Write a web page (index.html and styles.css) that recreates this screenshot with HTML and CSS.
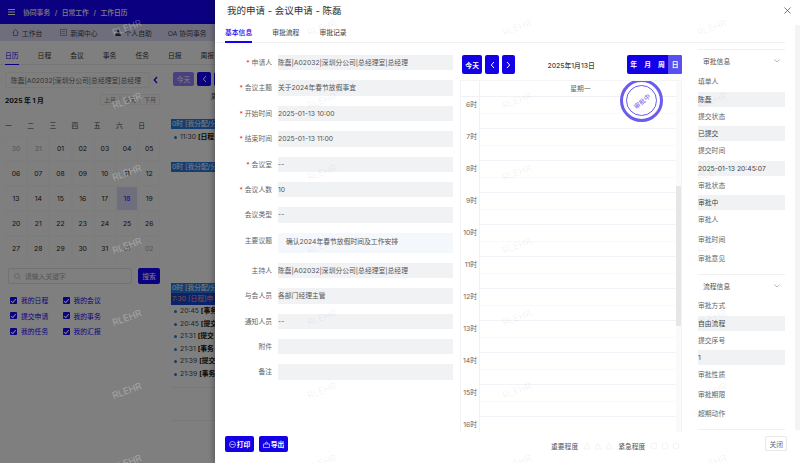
FILE: index.html
```html
<!DOCTYPE html>
<html lang="zh-CN">

<head>
    <meta charset="UTF-8">
    <title>工作日历</title>
    <link rel="stylesheet" href="styles.css">
</head>

<body>
    <!-- 背景页面 -->
    <div class="page">
        <div class="topBar">
            <svg class="menuIcon" width="7" height="6" viewBox="0 0 7 6"><path d="M0 .5h7M0 3h7M0 5.500h7" stroke="#fff" stroke-width="1"/></svg>
            <span>协同事务</span><i>/</i><span>日常工作</span><i>/</i><span>工作日历</span>
        </div>
        <div class="navBar">
            <span class="navItem n1">
                <svg width="7" height="7" viewBox="0 0 7 7"><path d="M.5 3.500L3.500.5l3 3M1.500 3v3.500h4V3" fill="none" stroke="#444" stroke-width=".6"/></svg>工作台
            </span>
            <span class="navItem n2">
                <svg width="7" height="7" viewBox="0 0 7 7"><path d="M.5.5h6v6h-6zM2 2.500h3M2 4.500h3" fill="none" stroke="#666" stroke-width=".6"/></svg>新闻中心
            </span>
            <span class="navItem n3">
                <svg width="8" height="7" viewBox="0 0 8 7"><circle cx="4" cy="2" r="1.500" fill="#333"/><path d="M1 7c0-2 1.500-3 3-3s3 1 3 3z" fill="#333"/></svg>个人自助
            </span>
            <span class="navItem n4">OA 协同事务</span>
        </div>
        <div class="pageTabs">
            <span class="active">日历</span><span>日程</span><span>会议</span><span>事务</span><span>任务</span><span>日报</span><span>周报</span>
        </div>
        <div class="pageMain">
            <div class="leftCol">
                <div class="personRow">
                    <div class="personBox">陈磊|A02032|深圳分公司|总经理室|总经理</div>
                    <svg width="5" height="8" viewBox="0 0 5 8"><path d="M4 1L1.300 4L4 7" fill="none" stroke="#1600ff" stroke-width="1.300"/></svg>
                </div>
                <div class="monthRow">
                    <b>2025 年 1 月</b>
                    <div class="monthBtns"><span>上月</span><span>今天</span><span>下月</span></div>
                </div>
                <div class="weekHead">
                    <span>一</span><span>二</span><span>三</span><span>四</span><span>五</span><span>六</span><span>日</span>
                </div>
                <div class="dateGrid">
                    <span class="off">30</span><span class="off">31</span><span>01</span><span>02</span><span>03</span><span>04</span><span>05</span>
                    <span>06</span><span>07</span><span>08</span><span>09</span><span>10</span><span>11</span><span>12</span>
                    <span>13</span><span>14</span><span>15</span><span>16</span><span>17</span><span class="today">18</span><span>19</span>
                    <span>20</span><span>21</span><span>22</span><span>23</span><span>24</span><span>25</span><span>26</span>
                    <span>27</span><span>28</span><span>29</span><span>30</span><span>31</span><span class="off">01</span><span class="off">02</span>
                </div>
                <div class="searchRow">
                    <div class="searchBox">
                        <svg width="7" height="7" viewBox="0 0 7 7"><circle cx="3" cy="3" r="2.400" fill="none" stroke="#bbb" stroke-width=".8"/><path d="M5 5l1.500 1.500" stroke="#bbb" stroke-width=".8"/></svg>
                        请输入关键字
                    </div>
                    <button class="searchBtn">搜索</button>
                </div>
                <div class="checks">
                    <label><em></em>我的日程</label><label><em></em>我的会议</label>
                    <label><em></em>提交申请</label><label><em></em>我的事务</label>
                    <label><em></em>我的任务</label><label><em></em>我的汇报</label>
                </div>
            </div>
            <div class="rightCol">
                <div class="calTools">
                    <button class="blueBtn todayBtn">今天</button>
                    <button class="blueBtn arrowBtn">
                        <svg width="5" height="8" viewBox="0 0 5 8"><path d="M4 1L1.300 4L4 7" fill="none" stroke="#fff" stroke-width="1"/></svg>
                    </button>
                    <button class="blueBtn arrowBtn"></button>
                </div>
                <div class="calHead">周</div>
                <div class="bar first">0时 [我分配/分</div>
                <div class="ev">11:30 <b>[日程</b></div>
                <div class="bar second">0时 [我分配/分</div>
                <div class="bar third">0时 [我分配/分</div>
                <div class="bar fourth">7:30 [日程]申</div>
                <div class="ev tight">20:45 <b>[事务</b></div>
                <div class="ev tight">20:45 <b>[提交</b></div>
                <div class="ev tight">21:31 <b>[提交</b></div>
                <div class="ev tight">21:31 <b>[事务</b></div>
                <div class="ev tight">21:39 <b>[提交</b></div>
                <div class="ev tight">21:39 <b>[事务</b></div>
                <div class="calLine"></div>
                <div class="calLine low"></div>
            </div>
        </div>
        <div class="mask"></div>
    </div>

    <!-- 抽屉 -->
    <div class="drawer">
        <div class="drawerHead">
            <span>我的申请 - 会议申请 - 陈磊</span>
            <svg width="7" height="7" viewBox="0 0 7 7"><path d="M.5.5l6 6M6.500.5l-6 6" stroke="#555" stroke-width=".8"/></svg>
        </div>
        <div class="drawerTabs">
            <span class="active">基本信息</span><span>审批流程</span><span>审批记录</span>
        </div>
        <div class="drawerBody">
            <div class="form">
                <div class="row"><label><s>*</s>申请人</label><div class="field">陈磊|A02032|深圳分公司|总经理室|总经理</div></div>
                <div class="row"><label><s>*</s>会议主题</label><div class="field">关于2024年春节放假事宜</div></div>
                <div class="row"><label><s>*</s>开始时间</label><div class="field">2025-01-13 10:00</div></div>
                <div class="row"><label><s>*</s>结束时间</label><div class="field">2025-01-13 11:00</div></div>
                <div class="row"><label><s>*</s>会议室</label><div class="field">--</div></div>
                <div class="row"><label><s>*</s>会议人数</label><div class="field">10</div></div>
                <div class="row"><label>会议类型</label><div class="field">--</div></div>
                <div class="row tall"><label>主要议题</label><div class="field area">确认2024年春节放假时间及工作安排</div></div>
                <div class="row"><label>主持人</label><div class="field">陈磊|A02032|深圳分公司|总经理室|总经理</div></div>
                <div class="row"><label>与会人员</label><div class="field">各部门经理主管</div></div>
                <div class="row"><label>通知人员</label><div class="field">--</div></div>
                <div class="row"><label>附件</label><div class="field"></div></div>
                <div class="row"><label>备注</label><div class="field"></div></div>
            </div>

            <div class="schedule">
                <div class="schTools">
                    <button class="schBtn wide">今天</button>
                    <button class="schBtn">
                        <svg width="5" height="8" viewBox="0 0 5 8"><path d="M4 1L1.300 4L4 7" fill="none" stroke="#fff" stroke-width="1"/></svg>
                    </button>
                    <button class="schBtn">
                        <svg width="5" height="8" viewBox="0 0 5 8"><path d="M1 1L3.700 4L1 7" fill="none" stroke="#fff" stroke-width="1"/></svg>
                    </button>
                    <div class="schDate">2025年1月13日</div>
                    <div class="schView"><span>年</span><span>月</span><span>周</span><span class="on">日</span></div>
                </div>
                <div class="schGrid">
                    <div class="schHead"><div class="axis"></div><div class="schDay">星期一</div></div>
                    <div class="schBody">
                        <div class="hour"><div class="axis">6时</div><div class="slot"></div></div>
                        <div class="hour"><div class="axis">7时</div><div class="slot"></div></div>
                        <div class="hour"><div class="axis">8时</div><div class="slot"></div></div>
                        <div class="hour"><div class="axis">9时</div><div class="slot"></div></div>
                        <div class="hour"><div class="axis">10时</div><div class="slot"></div></div>
                        <div class="hour"><div class="axis">11时</div><div class="slot"></div></div>
                        <div class="hour"><div class="axis">12时</div><div class="slot"></div></div>
                        <div class="hour"><div class="axis">13时</div><div class="slot"></div></div>
                        <div class="hour"><div class="axis">14时</div><div class="slot"></div></div>
                        <div class="hour"><div class="axis">15时</div><div class="slot"></div></div>
                        <div class="hour"><div class="axis">16时</div><div class="slot"></div></div>
                    </div>
                    <div class="schScroll"><div class="schThumb"></div></div>
                    <!-- 审批中印章 -->
                    <div class="stamp"><div class="stampInner"><span>审批中</span></div></div>
                </div>
            </div>

            <div class="side">
                <div class="sideTitle">审批信息
                    <svg width="6" height="4" viewBox="0 0 6 4"><path d="M.5.500L3 3L5.500.500" fill="none" stroke="#888" stroke-width=".6"/></svg>
                </div>
                <div class="sideLabel">填单人</div><div class="sideValue">陈磊</div>
                <div class="sideLabel">提交状态</div><div class="sideValue">已提交</div>
                <div class="sideLabel">提交时间</div><div class="sideValue">2025-01-13 20:45:07</div>
                <div class="sideLabel">审批状态</div><div class="sideValue">审批中</div>
                <div class="sideLabel">审批人</div>
                <div class="sideLabel">审批时间</div>
                <div class="sideLabel">审批意见</div>
                <div class="sideTitle second">流程信息
                    <svg width="6" height="4" viewBox="0 0 6 4"><path d="M.5.500L3 3L5.500.500" fill="none" stroke="#888" stroke-width=".6"/></svg>
                </div>
                <div class="sideLabel">审批方式</div><div class="sideValue">自由流程</div>
                <div class="sideLabel">提交序号</div><div class="sideValue">1</div>
                <div class="sideLabel">审批性质</div>
                <div class="sideLabel">审批期限</div>
                <div class="sideLabel">超期动作</div>
            </div>
        </div>
        <div class="drawerFoot">
            <button class="footBtn">
                <svg width="7" height="7" viewBox="0 0 7 7"><circle cx="3.500" cy="3.500" r="3" fill="none" stroke="#fff" stroke-width=".6"/><path d="M1.500 3.500h4" stroke="#fff" stroke-width=".6"/></svg>打印
            </button>
            <button class="footBtn">
                <svg width="7" height="7" viewBox="0 0 7 7"><path d="M.5 3h6v3.500h-6zM2 3l1-2h1l1 2" fill="none" stroke="#fff" stroke-width=".6"/></svg>导出
            </button>
            <div class="rate first">重要程度
                <svg width="30" height="8" viewBox="0 0 30 8"><g fill="none" stroke="#f0f0f0" stroke-width=".8"><path d="M4 1l3 6H1z"/><path d="M15 1l3 6h-6z"/><path d="M26 1l3 6h-6z"/></g></svg>
            </div>
            <div class="rate">紧急程度
                <svg width="30" height="8" viewBox="0 0 30 8"><g fill="none" stroke="#f0f0f0" stroke-width=".8"><circle cx="4" cy="4" r="3"/><circle cx="15" cy="4" r="3"/><circle cx="26" cy="4" r="3"/></g></svg>
            </div>
            <button class="closeBtn">关闭</button>
        </div>
        <div class="drawerScroll"></div>
    </div>

    <!-- 水印 -->
    <div class="marks">
        <span>RLEHR</span><span>RLEHR</span><span>RLEHR</span><span>RLEHR</span>
        <span>RLEHR</span><span>RLEHR</span><span>RLEHR</span><span>RLEHR</span>
        <span>RLEHR</span><span>RLEHR</span><span>RLEHR</span><span>RLEHR</span>
        <span>RLEHR</span><span>RLEHR</span><span>RLEHR</span><span>RLEHR</span>
        <span>RLEHR</span><span>RLEHR</span><span>RLEHR</span><span>RLEHR</span>
        <span>RLEHR</span><span>RLEHR</span><span>RLEHR</span><span>RLEHR</span>
        <span>RLEHR</span><span>RLEHR</span><span>RLEHR</span><span>RLEHR</span>
    </div>
</body>

</html>
```

FILE: styles.css
```css
* {
    box-sizing: border-box;
}

body {
    margin: 0;
    width: 800px;
    height: 463px;
    display: flex;
    overflow: hidden;
    position: relative;
    background: #fff;
    font-family: Inter, "Noto Sans CJK SC", sans-serif;
    font-size: 6.800px;
    color: #555;
}

button {
    font-family: inherit;
    border: none;
    padding: 0;
}

/* 背景页面 */
.page {
    width: 215px;
    height: 463px;
    flex: none;
    overflow: hidden;
    position: relative;
    background: #fff;
}

.mask {
    position: absolute;
    top: 0;
    right: 0;
    bottom: 0;
    left: 0;
    background: rgba(0, 0, 0, .5);
}

.topBar {
    height: 24px;
    display: flex;
    align-items: center;
    gap: 3.500px;
    padding-left: 8px;
    background: #1600ff;
    color: #fff;
    font-weight: 500;
}

.topBar .menuIcon {
    margin-right: 4.500px;
}

.topBar span {
    flex: none;
}

.topBar i {
    font-style: normal;
    margin: 0 1px;
}

.navBar {
    height: 17px;
    display: flex;
    align-items: center;
    background: #dedcf8;
    color: #444;
}

.navItem {
    flex: none;
    display: flex;
    align-items: center;
    gap: 3px;
}

.navItem.n1 {
    margin-left: 12px;
}

.navItem.n2 {
    margin-left: 18px;
}

.navItem.n3 {
    margin-left: 16px;
}

.navItem.n4 {
    margin-left: 16px;
}

.pageTabs {
    height: 24px;
    display: flex;
    gap: 19px;
    padding: 8px 0 0 5px;
    border-bottom: 1px solid #ececec;
    color: #333;
}

.pageTabs span {
    flex: none;
    height: 16px;
    line-height: 13px;
    white-space: nowrap;
}

.pageTabs .active {
    color: #1600ff;
    border-bottom: 1px solid #1600ff;
}

.pageMain {
    display: flex;
}

.leftCol {
    width: 165px;
    flex: none;
    padding: 7px 0 0 5px;
}

.personRow {
    display: flex;
    align-items: center;
    gap: 3px;
}

.personBox {
    width: 145px;
    height: 16px;
    line-height: 15px;
    padding-left: 5px;
    border: 1px solid #f2f2f2;
    color: #666;
    white-space: nowrap;
    overflow: hidden;
}

.monthRow {
    display: flex;
    justify-content: space-between;
    align-items: center;
    height: 15px;
    margin-top: 4px;
    padding-right: 5px;
    color: #111;
}

.monthBtns {
    display: flex;
}

.monthBtns span {
    width: 20px;
    height: 11px;
    line-height: 10px;
    text-align: center;
    font-size: 6px;
    color: #888;
    border: 1px solid #f2f2f2;
}

.weekHead {
    display: grid;
    grid-template-columns: repeat(7, 22.2px);
    margin-top: 12px;
    height: 13px;
    line-height: 13px;
    color: #444;
}

.dateGrid {
    display: grid;
    grid-template-columns: repeat(7, 22.2px);
    grid-auto-rows: 24.9px;
    margin-top: 4px;
}

.dateGrid span {
    text-align: center;
    line-height: 24px;
    color: #222;
    border: 1px solid #fafafa;
}

.dateGrid .off {
    color: #aaa;
}

.dateGrid .today {
    background: #dedcf8;
    color: #1600ff;
}

.searchRow {
    display: flex;
    gap: 6px;
    margin: 8px 0 0 3px;
}

.searchBox {
    width: 124px;
    height: 16px;
    display: flex;
    align-items: center;
    gap: 4px;
    padding-left: 5px;
    border: 1px solid #e4e4e4;
    border-radius: 2px;
    color: #aaa;
}

.searchBtn {
    width: 22px;
    height: 16px;
    border-radius: 2px;
    background: #1600ff;
    color: #fff;
    font-size: 6.800px;
}

.checks {
    display: grid;
    grid-template-columns: 52.5px 60px;
    grid-auto-rows: 15.6px;
    margin: 8px 0 0 5px;
    color: #1600ff;
}

.checks label {
    display: flex;
    align-items: center;
    gap: 4px;
}

.checks em {
    width: 7px;
    height: 7px;
    border-radius: 1px;
    background: #1600ff;
    position: relative;
}

.checks em::after {
    content: "";
    position: absolute;
    left: 2.300px;
    top: 1px;
    width: 2px;
    height: 3.500px;
    border-right: 1px solid #fff;
    border-bottom: 1px solid #fff;
    transform: rotate(40deg);
}

.rightCol {
    flex: 1;
    padding: 7px 0 0 6px;
    min-width: 0;
}

.calTools {
    display: flex;
    gap: 3px;
    margin-left: 2px;
}

.blueBtn {
    flex: none;
    height: 14px;
    display: flex;
    align-items: center;
    justify-content: center;
    border-radius: 2px;
    background: #1600ff;
    color: #fff;
    font-size: 6.800px;
}

.todayBtn {
    width: 21px;
    background: #9480ff;
}

.arrowBtn {
    width: 14px;
}

.calHead {
    height: 33px;
    line-height: 22px;
    padding-left: 40px;
    color: #333;
}

.bar {
    height: 10px;
    line-height: 10px;
    padding-left: 1px;
    background: #2a7ce0;
    color: #fff;
    white-space: nowrap;
    overflow: hidden;
}

.bar.second {
    margin-top: 18.400px;
}

.bar.third {
    margin-top: 111px;
}

.bar.fourth {
    background: #1147d8;
    color: #ff9a80;
    height: 12px;
    line-height: 12px;
}

.ev {
    height: 12.600px;
    line-height: 12.600px;
    padding-left: 9px;
    margin-top: 2px;
    white-space: nowrap;
    position: relative;
    color: #444;
}

.ev.tight {
    margin-top: 0;
}

.ev::before {
    content: "";
    width: 3px;
    height: 3px;
    border-radius: 50%;
    background: #2a7ce0;
    position: absolute;
    left: 3px;
    top: 5px;
}

.ev b {
    color: #111;
}

.calLine {
    margin-top: 6.400px;
    border-top: 1px solid #f2f2f2;
}

.calLine.low {
    margin-top: 32px;
}

/* 抽屉 */
.drawer {
    width: 585px;
    height: 463px;
    flex: none;
    display: flex;
    flex-direction: column;
    position: relative;
    background: #fff;
    box-shadow: -2px 0 5px rgba(0, 0, 0, .25);
}

.drawerHead {
    height: 25px;
    display: flex;
    justify-content: space-between;
    align-items: center;
    padding: 0 9px 5px 12px;
    font-size: 9.500px;
    color: #333;
}

.drawerTabs {
    height: 18px;
    display: flex;
    gap: 20px;
    margin-right: 15px;
    padding-left: 10px;
    border-bottom: 1px solid #f0f0f0;
}

.drawerTabs span {
    height: 18px;
    line-height: 15px;
    font-weight: 500;
}

.drawerTabs .active {
    color: #1600f5;
    border-bottom: 2px solid #1600f5;
}

.drawerBody {
    height: 389px;
    display: flex;
}

.form {
    width: 238px;
    flex: none;
    padding-top: 12px;
}

.row {
    display: flex;
    height: 15.400px;
    margin-bottom: 10px;
}

.row label {
    width: 57px;
    flex: none;
    line-height: 15px;
    text-align: right;
    color: #666;
}

.row label s {
    text-decoration: none;
    color: #f5222d;
    margin-right: 2px;
}

.field {
    width: 175px;
    margin-left: 6px;
    line-height: 15.400px;
    background: #f1f2f4;
    color: #555;
}

.row.tall {
    height: 20px;
}

.field.area {
    height: 20px;
    line-height: 18px;
    padding-left: 8px;
    background: #f4f7fb;
}

.schedule {
    width: 222px;
    flex: none;
    margin-left: 7px;
    padding-top: 12px;
}

.schTools {
    display: flex;
    gap: 3px;
    align-items: center;
    padding-left: 2px;
}

.schBtn {
    width: 14px;
    height: 19px;
    display: flex;
    align-items: center;
    justify-content: center;
    border-radius: 2px;
    background: #1400e6;
    color: #fff;
    font-size: 6.800px;
    font-weight: 700;
}

.schBtn.wide {
    width: 21px;
}

.schDate {
    width: 109px;
    text-align: center;
    color: #444;
    font-weight: 500;
}

.schView {
    width: 57px;
    height: 19px;
    display: flex;
    border-radius: 2px;
    overflow: hidden;
    background: #1400e6;
    color: #fff;
    font-weight: 700;
}

.schView span {
    flex: 1;
    text-align: center;
    line-height: 19px;
}

.schView .on {
    background: #5a4ff0;
}

.schGrid {
    height: 352px;
    margin-top: 6px;
    position: relative;
    overflow: hidden;
    border: 1px solid #f3f3f8;
    border-bottom: none;
}

.schHead {
    height: 16px;
    display: flex;
    border-bottom: 1px solid #f0f0f6;
}

.axis {
    width: 19px;
    flex: none;
    padding-right: 2px;
    text-align: right;
    line-height: 16px;
    border-right: 1px solid #f0f0f6;
    color: #666;
}

.schDay {
    flex: 1;
    text-align: center;
    line-height: 16px;
    color: #666;
}

.hour {
    height: 32px;
    display: flex;
}

.slot {
    flex: 1;
    border-bottom: 1px solid #f2f2f8;
    background: linear-gradient(#f9f9fb, #f9f9fb) 0 15.500px / 100% 1px no-repeat;
}

.schScroll {
    position: absolute;
    top: 0;
    right: 0;
    bottom: 0;
    width: 5px;
    background: #fafafa;
}

.schThumb {
    margin-top: 105px;
    height: 140px;
    background: #e6e6e6;
}

.stamp {
    position: absolute;
    left: 159px;
    top: -2px;
    width: 43px;
    height: 43px;
    padding: 3px;
    border: 3px solid #6a5cec;
    border-radius: 50%;
    background: #fff;
}

.stampInner {
    width: 100%;
    height: 100%;
    display: flex;
    align-items: center;
    justify-content: center;
    border: 1px solid #6a5cec;
    border-radius: 50%;
    color: #6a5cec;
}

.stampInner span {
    transform: rotate(-40deg);
    font-size: 6.500px;
}

.side {
    width: 87px;
    flex: none;
    margin: 6px 0 0 16px;
    border-top: 1px solid #f0f0f0;
    border-bottom: 1px solid #f0f0f0;
    height: 381px;
}

.sideTitle {
    height: 22px;
    display: flex;
    justify-content: space-between;
    align-items: center;
    padding: 0 5px;
    color: #555;
}

.sideTitle.second {
    margin-top: 5.500px;
    border-top: 1px solid #f0f0f0;
}

.sideLabel {
    height: 19.500px;
    line-height: 20px;
    color: #666;
}

.sideValue {
    height: 15px;
    line-height: 15px;
    background: #f1f2f4;
    color: #444;
    white-space: nowrap;
}

.drawerFoot {
    height: 31px;
    display: flex;
    align-items: flex-start;
    padding: 4px 0 0 10px;
    gap: 5px;
}

.footBtn {
    width: 29px;
    height: 16px;
    display: flex;
    align-items: center;
    justify-content: center;
    gap: 1px;
    border-radius: 2px;
    background: #1400e6;
    color: #fff;
    font-size: 6.800px;
    font-weight: 700;
}

.rate {
    display: flex;
    align-items: center;
    gap: 5px;
    height: 18px;
    padding-top: 1px;
    color: #555;
}

.rate.first {
    margin-left: 258px;
}

.closeBtn {
    width: 22px;
    height: 15px;
    margin-left: 80px;
    background: #fff;
    border: 1px solid #e8e8e8;
    border-radius: 2px;
    color: #666;
    font-size: 6.800px;
}

.drawerScroll {
    position: absolute;
    top: 25px;
    right: 0;
    width: 5px;
    height: 405px;
    background: #f4f4f4;
}

/* 水印 */
.marks {
    position: absolute;
    top: 0;
    left: 0;
    width: 800px;
    height: 463px;
    overflow: hidden;
    display: grid;
    grid-template-columns: repeat(4, 195px);
    grid-auto-rows: 72.500px;
    padding: 20px 0 0 102px;
    pointer-events: none;
}

.marks span {
    width: 50px;
    height: 16px;
    line-height: 16px;
    text-align: center;
    font-size: 9.500px;
    color: rgba(0, 0, 0, .07);
    transform: rotate(-20deg);
}

.marks span:nth-child(4n+1) {
    color: rgba(255, 255, 255, .3);
}
```
